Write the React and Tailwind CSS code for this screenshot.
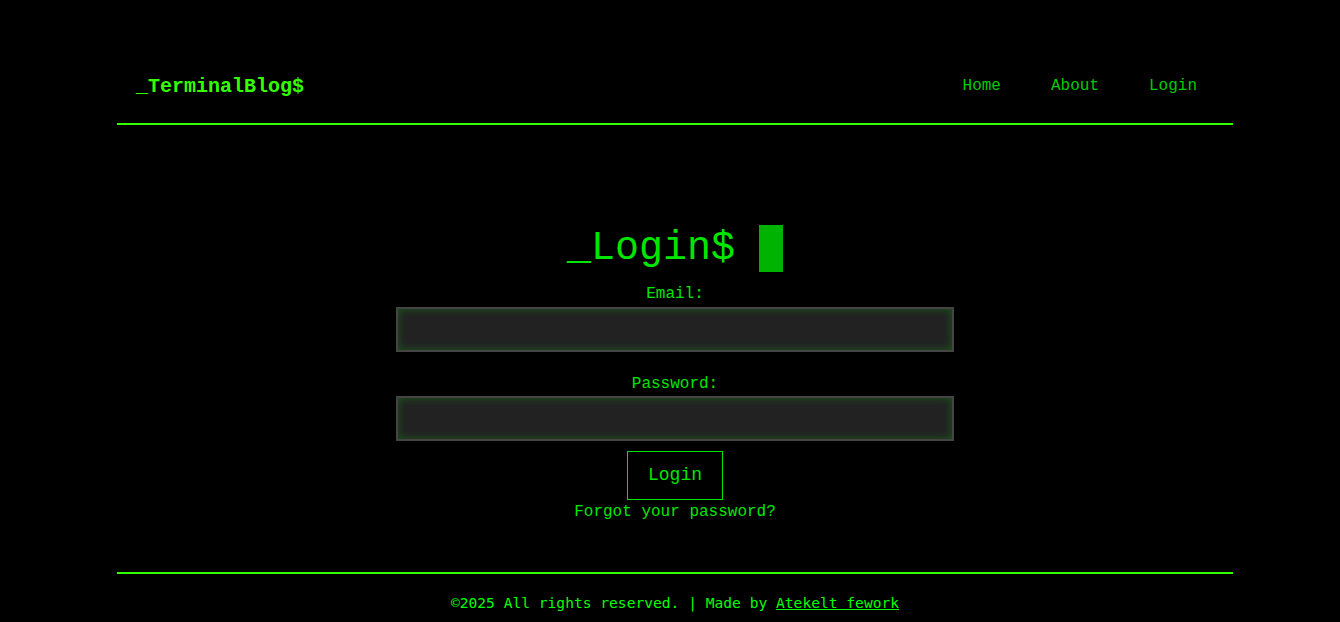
export default function App() {
  return (
    <div className="min-h-[622px] bg-black font-['Liberation_Mono','Courier_New',monospace] overflow-hidden">
      <div className="ml-[117px] w-[1116px] pt-[49px]">
        <header className="h-[76px] border-b-2 border-[#33ff00] flex items-center justify-between pl-[19px] pr-[20px]">
          <a className="text-[20px] font-bold text-[#33ff00] leading-none pt-[2px]">_TerminalBlog$</a>
          <nav className="flex gap-[18px] text-[16px] text-[#00cc00]">
            <a className="px-4">Home</a>
            <a className="px-4">About</a>
            <a className="px-4">Login</a>
          </nav>
        </header>

        <main className="flex flex-col items-center pt-[100px] h-[447px]">
          <h1 className="text-[40px] leading-[47px] text-[#00e600] flex items-center whitespace-pre">
            <span>_Login$ </span>
            <span className="inline-block w-[24px] h-[47px] bg-[#00b300]" />
          </h1>

          <form className="flex flex-col items-center mt-[13px]">
            <label className="text-[16px] leading-[18px] text-[#00e600]">Email:</label>
            <input
              type="email"
              className="mt-[4px] w-[558px] h-[45px] bg-[#222] border-2 border-[#444] shadow-[inset_0_0_8px_rgba(0,255,0,0.25)] outline-none"
            />
            <label className="mt-[23px] text-[16px] leading-[18px] text-[#00e600]">Password:</label>
            <input
              type="password"
              className="mt-[3px] w-[558px] h-[45px] bg-[#222] border-2 border-[#444] shadow-[inset_0_0_8px_rgba(0,255,0,0.25)] outline-none"
            />
            <button
              type="button"
              className="mt-[10px] w-[96px] h-[49px] border border-[#00e600] text-[18px] text-[#00e600] bg-transparent"
            >
              Login
            </button>
            <a className="mt-[3px] text-[16px] leading-[18px] text-[#00e600]">Forgot your password?</a>
          </form>
        </main>

        <footer className="border-t-2 border-[#33ff00] pt-[18px] pb-[10px] text-center">
          <p className="font-['DejaVu_Sans_Mono',monospace] text-[14.6px] text-[#00ff00]">
            ©2025 All rights reserved. | Made by <a className="underline">Atekelt fework</a>
          </p>
        </footer>
      </div>
    </div>
  );
}
